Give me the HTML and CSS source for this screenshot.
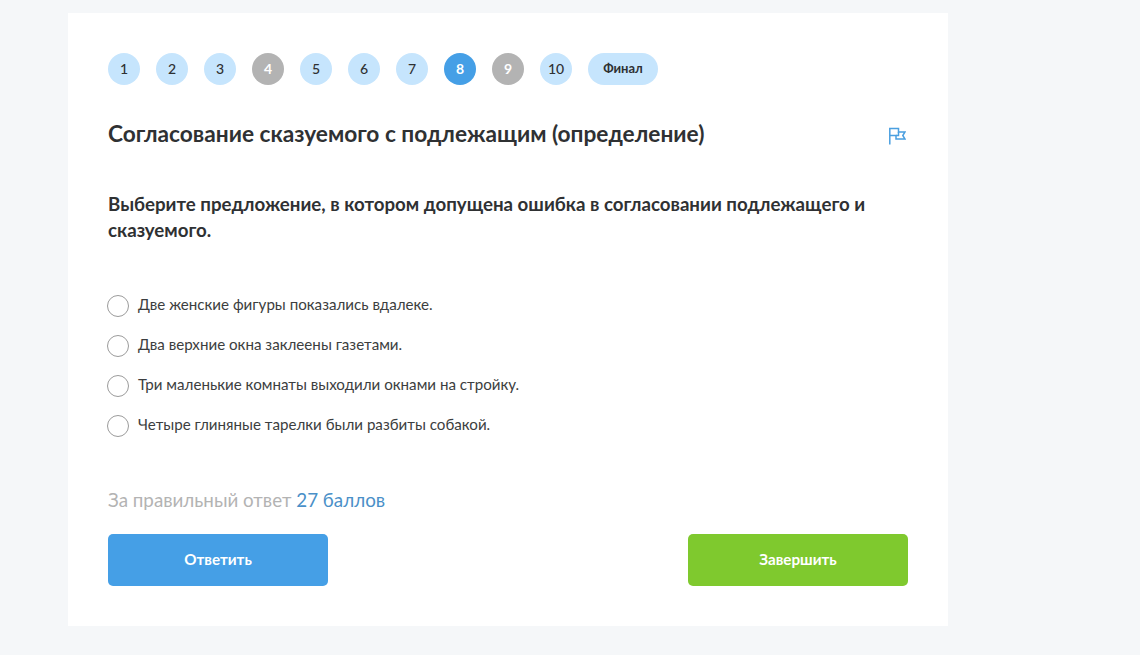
FILE: index.html
```html
<!DOCTYPE html>
<html lang="ru">
<head>
    <meta charset="UTF-8">
    <meta name="viewport" content="width=device-width, initial-scale=1.0">
    <title>Тест</title>
    <link rel="stylesheet" href="styles.css">
</head>
<body>

    <div class="card">
        <div class="steps">
            <div class="step">1</div>
            <div class="step">2</div>
            <div class="step">3</div>
            <div class="step skipped">4</div>
            <div class="step">5</div>
            <div class="step">6</div>
            <div class="step">7</div>
            <div class="step current">8</div>
            <div class="step skipped">9</div>
            <div class="step">10</div>
            <div class="step final">Финал</div>
        </div>

        <div class="title-row">
            <h1 class="title">Согласование сказуемого с подлежащим (определение)</h1>
            <svg class="flag" width="18" height="18" viewBox="0 0 18 18" fill="none" stroke="#4a9fe0" stroke-width="1.5">
                <path d="M1.8 17.5V1.5H10.5V5H17L14.8 8.5L17 12H8V8.5H1.8"/>
                <path d="M10.5 5V8.5H8"/>
            </svg>
        </div>

        <p class="question">Выберите предложение, в котором допущена ошибка в согласовании подлежащего и сказуемого.</p>

        <div class="answers">
            <label class="answer"><span class="radio"></span>Две женские фигуры показались вдалеке.</label>
            <label class="answer"><span class="radio"></span>Два верхние окна заклеены газетами.</label>
            <label class="answer"><span class="radio"></span>Три маленькие комнаты выходили окнами на стройку.</label>
            <label class="answer"><span class="radio"></span>Четыре глиняные тарелки были разбиты собакой.</label>
        </div>

        <div class="points">За правильный ответ <span class="points-value">27 баллов</span></div>

        <div class="buttons">
            <div class="btn btn-blue">Ответить</div>
            <div class="btn btn-green">Завершить</div>
        </div>
    </div>

</body>
</html>
```

FILE: styles.css
```css
body {
    margin: 0;
    height: 655px;
    overflow: hidden;
    background-color: #f5f7f9;
    font-family: "Lato", "Noto Sans", sans-serif;
    color: #2f3133;
}

.card {
    box-sizing: border-box;
    width: 880px;
    height: 613px;
    margin: 13px 0 0 68px;
    padding: 40px;
    background-color: #fff;
}

.steps {
    display: flex;
    gap: 16px;
}
.step {
    display: flex;
    align-items: center;
    justify-content: center;
    width: 32px;
    height: 32px;
    padding-bottom: 2px;
    box-sizing: border-box;
    border-radius: 16px;
    background-color: #c6e5fd;
    font-size: 14px;
    font-weight: 500;
}
.step.skipped {
    background-color: #b3b3b3;
    color: #fff;
    font-weight: 700;
}
.step.current {
    background-color: #459fe6;
    color: #fff;
    font-weight: 700;
}
.step.final {
    width: 70px;
    font-size: 13px;
    font-weight: 700;
}

.title-row {
    display: flex;
    align-items: center;
    justify-content: space-between;
    margin-top: 34px;
    height: 30px;
}
.title {
    margin: 0;
    font-size: 22.7px;
    font-weight: 700;
    line-height: 30px;
}
.flag {
    margin: 3px 2px 0 0;
}

.question {
    margin: 42px 0 0;
    font-size: 18.7px;
    font-weight: 700;
    line-height: 26px;
}

.answers {
    display: flex;
    flex-direction: column;
    gap: 18px;
    margin-top: 50px;
}
.answer {
    display: flex;
    align-items: center;
    gap: 9px;
    height: 22px;
    font-size: 15.15px;
    color: #3c3e40;
}
.radio {
    box-sizing: border-box;
    width: 22px;
    height: 22px;
    margin: 4px 0 0 -1px;
    border: 1px solid #9b9b9b;
    border-radius: 50%;
}

.points {
    margin-top: 52px;
    font-size: 18.8px;
    line-height: 26px;
    color: #b3b3b3;
}
.points-value {
    color: #4a90c8;
}

.buttons {
    display: flex;
    justify-content: space-between;
    margin-top: 21px;
}
.btn {
    display: flex;
    align-items: center;
    justify-content: center;
    box-sizing: border-box;
    width: 220px;
    height: 52px;
    padding-bottom: 2px;
    border-radius: 5px;
    color: #fff;
    font-size: 15.2px;
    font-weight: 700;
}
.btn-blue {
    background-color: #459fe6;
}
.btn-green {
    background-color: #7fc92e;
}
```
